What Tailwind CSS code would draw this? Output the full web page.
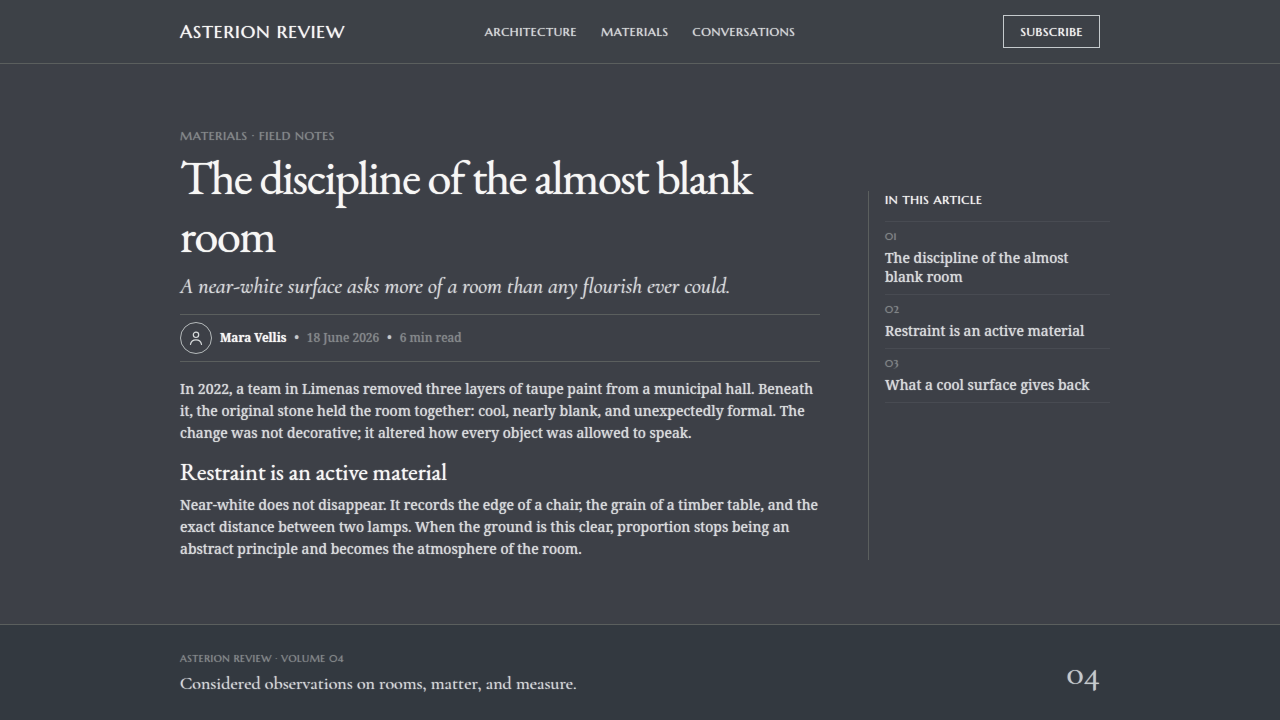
<!DOCTYPE html>
<html lang="en">
  <head>
    <meta charset="UTF-8" />
    <meta name="viewport" content="width=device-width, initial-scale=1.0" />
    <title>Asterion Review</title>
    <script src="https://cdn.jsdelivr.net/npm/@tailwindcss/browser@4"></script>
  </head>
  <body class="flex min-h-screen flex-col bg-[#3d4047] font-['Noto_Serif','DejaVu_Serif_Condensed',serif] text-[#d8dbdc] [text-shadow:0_0_1px_currentColor]">
    <header class="border-b border-[#5b5f5e] bg-[#3d4147] font-['Marcellus','Lato',sans-serif]">
      <div class="mx-auto grid h-[63px] max-w-[920px] grid-cols-[1fr_auto_1fr] items-center">
        <a href="#" class="text-lg leading-6 tracking-wider text-[#f7f7f5]">ASTERION REVIEW</a>
        <nav class="flex gap-6 text-xs leading-4 tracking-wider text-[#d8dbdc]">
          <a href="#">ARCHITECTURE</a>
          <a href="#">MATERIALS</a>
          <a href="#">CONVERSATIONS</a>
        </nav>
        <button type="button" class="justify-self-end border border-[#c5cacd] px-4 py-2 text-xs leading-[15px] tracking-wider text-[#f7f7f5] [text-shadow:0_0_1px_currentColor]">SUBSCRIBE</button>
      </div>
    </header>

    <main class="mx-auto grid w-full max-w-[920px] flex-1 grid-cols-[640px_242px] gap-12 py-16">
      <article>
        <p class="font-['Marcellus','Lato',sans-serif] text-xs leading-4 tracking-wider text-[#85898b]">MATERIALS · FIELD NOTES</p>
        <h1 class="mt-1 font-['EB_Garamond','Liberation_Serif',serif] text-5xl leading-[58px] tracking-[-0.03em] text-[#f7f7f5]">The discipline of the almost blank room</h1>
        <p class="mt-2 mb-3.5 font-['Cormorant_Garamond','Liberation_Serif',serif] text-[22px] leading-7 italic">A near-white surface asks more of a room than any flourish ever could.</p>
        <div class="flex items-center gap-2 border-y border-[#5b5f5e] py-[7px] text-xs text-[#85898b]">
          <span class="flex size-8 items-center justify-center rounded-full border border-[#b5babb] text-[#d8dbdc]">
            <svg class="size-4" viewBox="0 0 16 16" fill="none" stroke="currentColor" stroke-width="1.2" stroke-linecap="round">
              <circle cx="8" cy="4.800" r="2.700" />
              <path d="M2.500 14.300c.5-2.800 2.700-4.500 5.500-4.500s5 1.700 5.500 4.500" />
            </svg>
          </span>
          <span class="font-semibold text-[#f7f7f5]">Mara Vellis</span>
          <span class="text-[#c5cacd]">•</span>
          <time datetime="2026-06-18">18 June 2026</time>
          <span class="text-[#c5cacd]">•</span>
          <span>6 min read</span>
        </div>
        <p class="mt-4 text-sm leading-[22px]">In 2022, a team in Limenas removed three layers of taupe paint from a municipal hall. Beneath it, the original stone held the room together: cool, nearly blank, and unexpectedly formal. The change was not decorative; it altered how every object was allowed to speak.</p>
        <h2 class="mt-3.5 font-['EB_Garamond','Liberation_Serif',serif] text-2xl leading-7 text-[#f7f7f5]">Restraint is an active material</h2>
        <p class="mt-2 text-sm leading-[22px]">Near-white does not disappear. It records the edge of a chair, the grain of a timber table, and the exact distance between two lamps. When the ground is this clear, proportion stops being an abstract principle and becomes the atmosphere of the room.</p>
      </article>

      <aside class="mt-[63px] border-l border-[#5b5f5e] pl-4">
        <h2 class="border-b border-[#484b52] pb-[13px] font-['Marcellus','Lato',sans-serif] text-xs leading-[17px] tracking-wider text-[#f7f7f5]">IN THIS ARTICLE</h2>
        <ol class="text-sm leading-[19px]">
          <li class="border-b border-[#484b52] pt-[7px] pb-2">
            <span class="mb-[3px] block font-['Marcellus','Lato',sans-serif] text-[10px] leading-4 tracking-wider text-[#85898b]">01</span>
            <a href="#" class="block">The discipline of the almost blank room</a>
          </li>
          <li class="border-b border-[#484b52] pt-[7px] pb-2">
            <span class="mb-[3px] block font-['Marcellus','Lato',sans-serif] text-[10px] leading-4 tracking-wider text-[#85898b]">02</span>
            <a href="#" class="block">Restraint is an active material</a>
          </li>
          <li class="border-b border-[#484b52] pt-[7px] pb-2">
            <span class="mb-[3px] block font-['Marcellus','Lato',sans-serif] text-[10px] leading-4 tracking-wider text-[#85898b]">03</span>
            <a href="#" class="block">What a cool surface gives back</a>
          </li>
        </ol>
      </aside>
    </main>

    <footer class="border-t border-[#5b5f5e] bg-[#333940]">
      <div class="mx-auto flex max-w-[920px] items-center justify-between pt-[26px] pb-[25px]">
        <div>
          <p class="font-['Marcellus','Lato',sans-serif] text-[10px] leading-4 tracking-wider text-[#85898b]">ASTERION REVIEW · VOLUME 04</p>
          <p class="mt-1 font-['Cormorant_Garamond','Liberation_Serif',serif] text-lg leading-6">Considered observations on rooms, matter, and measure.</p>
        </div>
        <span class="font-['Cormorant_Garamond','Liberation_Serif',serif] text-4xl leading-8 text-[#c5cacd]">04</span>
      </div>
    </footer>
  </body>
</html>
